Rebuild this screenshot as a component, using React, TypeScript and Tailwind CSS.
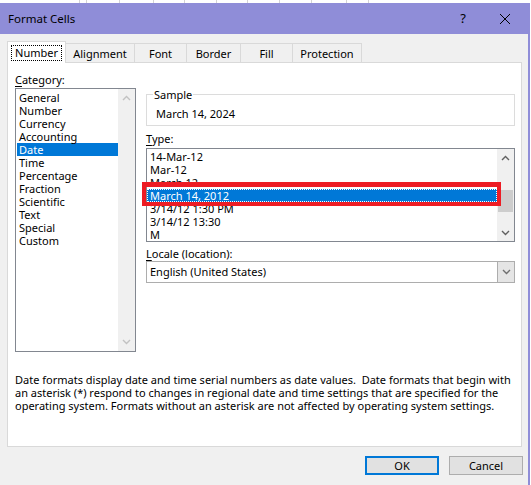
import React from 'react';

const categories = ['General', 'Number', 'Currency', 'Accounting', 'Date', 'Time', 'Percentage', 'Fraction', 'Scientific', 'Text', 'Special', 'Custom'];
const dateTypes = ['14-Mar-12', 'Mar-12', 'March 12', 'March 14, 2012', '3/14/12 1:30 PM', '3/14/12 13:30', 'M'];

// sheet columns peeking out above the dialog
const sheetCols = ['w-[80px]', 'w-[7px]', 'w-[33px]', 'w-[34px]', 'w-[31px]', 'w-[32px]', 'w-[31px]', 'w-[32px]', 'w-[32px]', 'w-[35px]', 'w-[22px]'];

function Chevron({ up = false, color = '#606060' }: { up?: boolean; color?: string }) {
    return (
        <svg width="9" height="6" viewBox="0 0 9 6" fill="none">
            <polyline
                points={up ? '1,5 4.5,1.5 8,5' : '1,1 4.5,4.5 8,1'}
                stroke={color}
                strokeWidth="1.4"
            />
        </svg>
    );
}

function Underlined({ ch, rest }: { ch: string; rest: string }) {
    return (
        <span>
            <span className="underline underline-offset-[2px]">{ch}</span>
            {rest}
        </span>
    );
}

export default function App() {
    return (
        <div className="w-[531px] h-[485px] bg-white overflow-hidden font-['Noto_Sans',sans-serif] text-[11px] text-black">
            {/* spreadsheet strip behind the dialog */}
            <div className="h-[3px] flex overflow-hidden">
                {sheetCols.map((w, i) => (
                    <div key={i} className={`${w} h-full border-r border-[#D4D4D4] shrink-0 overflow-hidden`}>
                        {i === 0 && <div className="-mt-[11px] pl-[8px] leading-[14px] text-[#333]">+GB</div>}
                    </div>
                ))}
            </div>

            <div className="w-[530px] h-[482px] flex flex-col border-r-2 border-[#8F8DD8]">
                {/* title bar */}
                <div className="h-[31px] bg-[#8F8DD8] flex items-center pl-[8px] pr-[17px]">
                    <span className="text-[11.5px] leading-[15px]">Format Cells</span>
                    <span className="ml-auto text-[13px] leading-[15px] mr-[33px]">?</span>
                    <svg width="12" height="12" viewBox="0 0 12 12">
                        <path d="M1 1 L11 11 M11 1 L1 11" stroke="#000" strokeWidth="1" />
                    </svg>
                </div>

                <div className="flex-1 bg-[#F0F0F0] pl-[7px] pt-[7px]">
                    {/* tabs */}
                    <div className="flex items-end h-[21px]">
                        <div className="relative z-10 -mb-px w-[59px] h-[22px] bg-white border border-b-0 border-[#D9D9D9] flex items-center justify-center">
                            <span className="px-[3px] h-[16px] mt-[1px] leading-[14px] border border-dotted border-black">Number</span>
                        </div>
                        {[
                            ['Alignment', 'w-[70px]'],
                            ['Font', 'w-[53px]'],
                            ['Border', 'w-[55px]'],
                            ['Fill', 'w-[53px]'],
                            ['Protection', 'w-[70px]'],
                        ].map(([t, w]) => (
                            <div key={t} className={`${w} -ml-px h-[19px] border border-b-0 border-[#D9D9D9] flex items-center justify-center pt-[2px]`}>
                                {t}
                            </div>
                        ))}
                    </div>

                    {/* page */}
                    <div className="w-[515px] h-[385px] bg-white border border-[#D9D9D9] pl-[7px] pt-[9px]">
                        <div className="flex items-start">
                            {/* category column */}
                            <div className="w-[121px]">
                                <div className="leading-[15px]">
                                    <Underlined ch="C" rest="ategory:" />
                                </div>
                                <div className="mt-px h-[264px] border border-[#828790] flex">
                                    <div className="w-[102px] pl-px pt-[2px]">
                                        {categories.map((c) => (
                                            <div
                                                key={c}
                                                className={`h-[13px] leading-[13px] pl-[2px] ${c === 'Date' ? 'bg-[#0078D7] text-white' : ''}`}
                                            >
                                                {c}
                                            </div>
                                        ))}
                                    </div>
                                    <div className="w-[17px] bg-[#F0F0F0] flex flex-col items-center justify-between py-[6px]">
                                        <Chevron up color="#C2C2C2" />
                                        <Chevron color="#C2C2C2" />
                                    </div>
                                </div>
                            </div>

                            {/* right column */}
                            <div className="ml-[10px] w-[369px] mt-[15px]">
                                <fieldset className="border border-[#DCDCDC] px-[8px] pb-[3px] h-[39px]">
                                    <legend className="ml-[-2px] px-px leading-[15px]">Sample</legend>
                                    <div className="mt-[5px] leading-[13px] pl-px">March 14, 2024</div>
                                </fieldset>

                                <div className="mt-[5px] leading-[15px]">
                                    <Underlined ch="T" rest="ype:" />
                                </div>
                                <div className="mt-[2px] h-[94px] border border-[#828790] flex">
                                    <div className="w-[350px] pt-px">
                                        {dateTypes.map((d) => (
                                            <div key={d} className="relative h-[13px]">
                                                {d === 'March 14, 2012' ? (
                                                    <>
                                                        <div className="h-full leading-[11px] pl-[2px] bg-[#0078D7] text-white border border-dotted border-white">
                                                            {d}
                                                        </div>
                                                        <div className="absolute z-10 -top-[7px] -left-[5px] -right-[4px] h-[24px] border-[4px] border-t-[5px] border-[#ED1C24]" />
                                                    </>
                                                ) : (
                                                    <div className="leading-[13px] pl-[3px]">{d}</div>
                                                )}
                                            </div>
                                        ))}
                                    </div>
                                    <div className="w-[17px] bg-[#F0F0F0] flex flex-col items-center">
                                        <div className="h-[17px] flex items-center justify-center">
                                            <Chevron up />
                                        </div>
                                        <div className="mt-[24px] w-[15px] h-[22px] bg-[#CDCDCD]" />
                                        <div className="mt-auto h-[17px] flex items-center justify-center">
                                            <Chevron />
                                        </div>
                                    </div>
                                </div>

                                <div className="mt-[4px] leading-[15px]">
                                    <Underlined ch="L" rest="ocale (location):" />
                                </div>
                                <div className="h-[22px] border border-[#ADADAD] flex">
                                    <div className="flex-1 pl-[3px] leading-[20px]">English (United States)</div>
                                    <div className="w-[17px] bg-[#E5E5E5] border-l border-[#ADADAD] flex items-center justify-center">
                                        <Chevron color="#707070" />
                                    </div>
                                </div>
                            </div>
                        </div>

                        <div className="mt-[21px] leading-[13px] whitespace-pre">
                            <div>Date formats display date and time serial numbers as date values.  Date formats that begin with</div>
                            <div>an asterisk (*) respond to changes in regional date and time settings that are specified for the</div>
                            <div>operating system. Formats without an asterisk are not affected by operating system settings.</div>
                        </div>
                    </div>

                    {/* buttons */}
                    <div className="w-[516px] mt-[9px] flex justify-end gap-[10px]">
                        <button className="w-[74px] h-[19px] bg-[#E1E1E1] border-2 border-[#0078D7] leading-[15px]">
                            OK
                        </button>
                        <button className="w-[74px] h-[19px] bg-[#E1E1E1] border border-[#ADADAD] leading-[17px]">
                            Cancel
                        </button>
                    </div>
                </div>
            </div>
        </div>
    );
}
